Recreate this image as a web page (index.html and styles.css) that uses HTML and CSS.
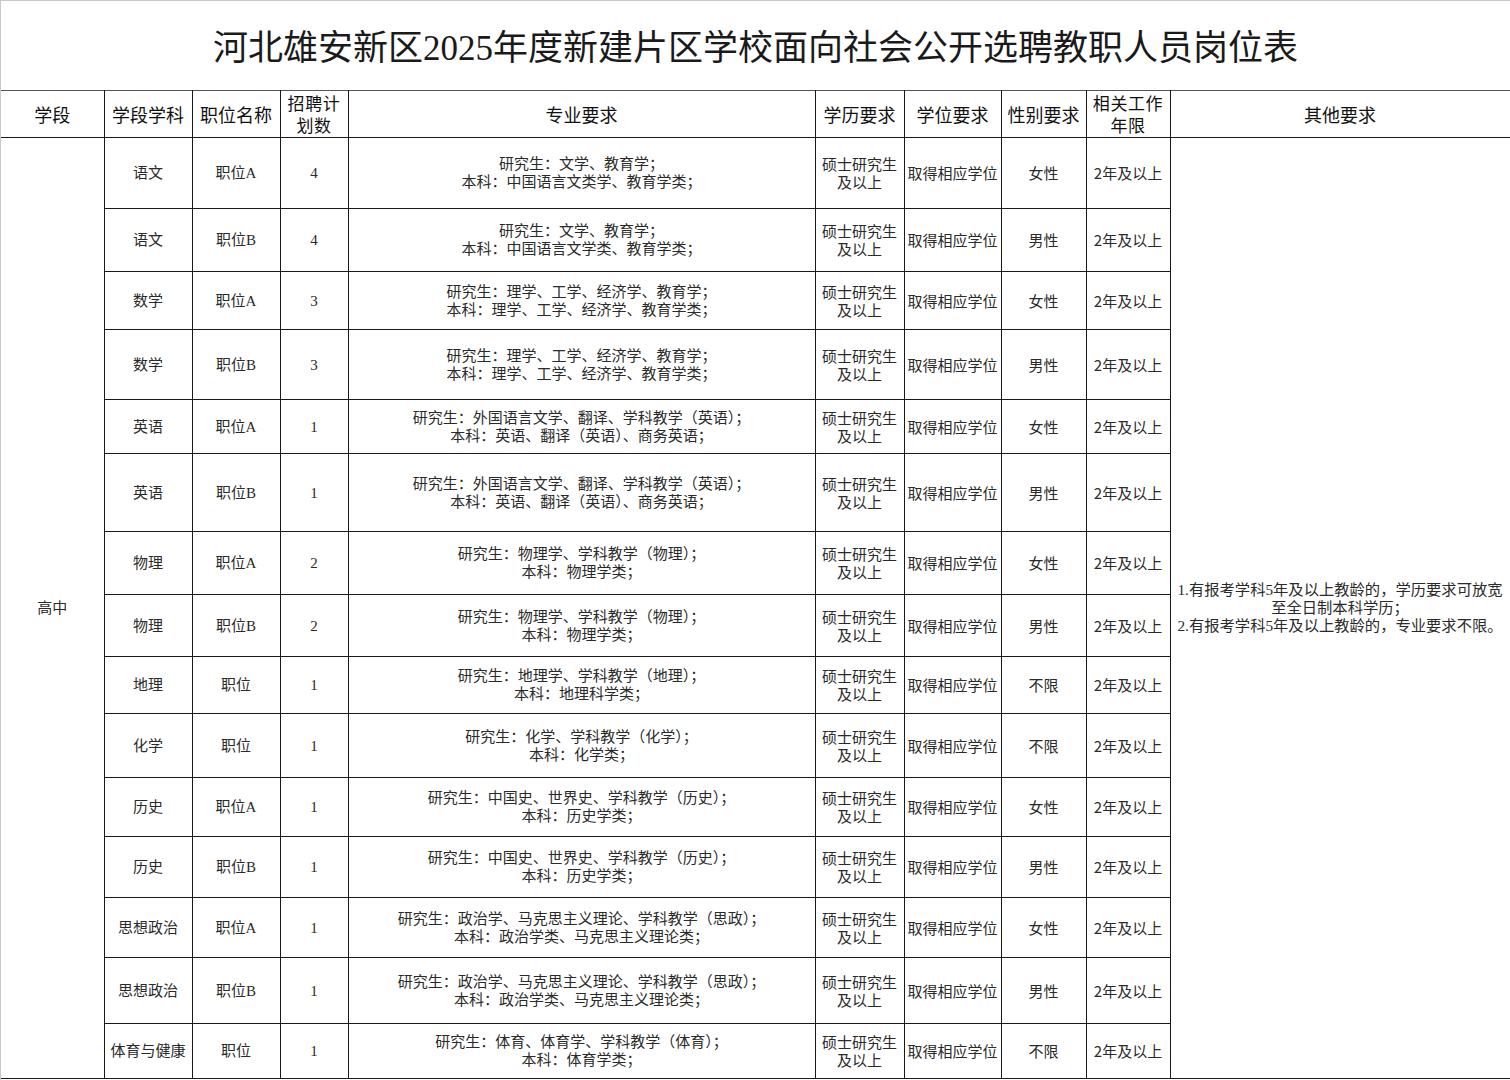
FILE: index.html
```html
<!DOCTYPE html>
<html lang="zh-CN">
<head>
<meta charset="utf-8">
<title>岗位表</title>
<link rel="stylesheet" href="styles.css">
</head>
<body>
<div class="sheet">
  <div class="title">河北雄安新区2025年度新建片区学校面向社会公开选聘教职人员岗位表</div>
  <table class="grid">
    <colgroup>
      <col class="c1"><col class="c2"><col class="c3"><col class="c4"><col class="c5">
      <col class="c6"><col class="c7"><col class="c8"><col class="c9"><col class="c10">
    </colgroup>
    <thead>
      <tr class="head">
        <th class="first">学段</th>
        <th>学段学科</th>
        <th>职位名称</th>
        <th class="two"><span class="ln">招聘计</span><span class="ln">划数</span></th>
        <th>专业要求</th>
        <th>学历要求</th>
        <th>学位要求</th>
        <th>性别要求</th>
        <th class="two"><span class="ln">相关工作</span><span class="ln">年限</span></th>
        <th>其他要求</th>
      </tr>
    </thead>
    <tbody>
      <tr class="h71">
        <td class="first stage" rowspan="15">高中</td>
        <td class="subj">语文</td><td class="pos">职位A</td><td class="num">4</td>
        <td class="major">研究生：文学、教育学；<br>本科：中国语言文类学、教育学类；</td>
        <td class="edu">硕士研究生<br>及以上</td><td class="deg">取得相应学位</td><td class="sex">女性</td><td class="yrs">2年及以上</td>
        <td class="other" rowspan="15">1.有报考学科5年及以上教龄的，学历要求可放宽<br>至全日制本科学历；<br>2.有报考学科5年及以上教龄的，专业要求不限。</td>
      </tr>
      <tr class="h63">
        <td class="subj">语文</td><td class="pos">职位B</td><td class="num">4</td>
        <td class="major">研究生：文学、教育学；<br>本科：中国语言文学类、教育学类；</td>
        <td class="edu">硕士研究生<br>及以上</td><td class="deg">取得相应学位</td><td class="sex">男性</td><td class="yrs">2年及以上</td>
      </tr>
      <tr class="h58">
        <td class="subj">数学</td><td class="pos">职位A</td><td class="num">3</td>
        <td class="major">研究生：理学、工学、经济学、教育学；<br>本科：理学、工学、经济学、教育学类；</td>
        <td class="edu">硕士研究生<br>及以上</td><td class="deg">取得相应学位</td><td class="sex">女性</td><td class="yrs">2年及以上</td>
      </tr>
      <tr class="h70">
        <td class="subj">数学</td><td class="pos">职位B</td><td class="num">3</td>
        <td class="major">研究生：理学、工学、经济学、教育学；<br>本科：理学、工学、经济学、教育学类；</td>
        <td class="edu">硕士研究生<br>及以上</td><td class="deg">取得相应学位</td><td class="sex">男性</td><td class="yrs">2年及以上</td>
      </tr>
      <tr class="h54">
        <td class="subj">英语</td><td class="pos">职位A</td><td class="num">1</td>
        <td class="major">研究生：外国语言文学、翻译、学科教学（英语）；<br>本科：英语、翻译（英语）、商务英语；</td>
        <td class="edu">硕士研究生<br>及以上</td><td class="deg">取得相应学位</td><td class="sex">女性</td><td class="yrs">2年及以上</td>
      </tr>
      <tr class="h78">
        <td class="subj">英语</td><td class="pos">职位B</td><td class="num">1</td>
        <td class="major">研究生：外国语言文学、翻译、学科教学（英语）；<br>本科：英语、翻译（英语）、商务英语；</td>
        <td class="edu">硕士研究生<br>及以上</td><td class="deg">取得相应学位</td><td class="sex">男性</td><td class="yrs">2年及以上</td>
      </tr>
      <tr class="h63">
        <td class="subj">物理</td><td class="pos">职位A</td><td class="num">2</td>
        <td class="major">研究生：物理学、学科教学（物理）；<br>本科：物理学类；</td>
        <td class="edu">硕士研究生<br>及以上</td><td class="deg">取得相应学位</td><td class="sex">女性</td><td class="yrs">2年及以上</td>
      </tr>
      <tr class="h62">
        <td class="subj">物理</td><td class="pos">职位B</td><td class="num">2</td>
        <td class="major">研究生：物理学、学科教学（物理）；<br>本科：物理学类；</td>
        <td class="edu">硕士研究生<br>及以上</td><td class="deg">取得相应学位</td><td class="sex">男性</td><td class="yrs">2年及以上</td>
      </tr>
      <tr class="h57">
        <td class="subj">地理</td><td class="pos">职位</td><td class="num">1</td>
        <td class="major">研究生：地理学、学科教学（地理）；<br>本科：地理科学类；</td>
        <td class="edu">硕士研究生<br>及以上</td><td class="deg">取得相应学位</td><td class="sex">不限</td><td class="yrs">2年及以上</td>
      </tr>
      <tr class="h64">
        <td class="subj">化学</td><td class="pos">职位</td><td class="num">1</td>
        <td class="major">研究生：化学、学科教学（化学）；<br>本科：化学类；</td>
        <td class="edu">硕士研究生<br>及以上</td><td class="deg">取得相应学位</td><td class="sex">不限</td><td class="yrs">2年及以上</td>
      </tr>
      <tr class="h59">
        <td class="subj">历史</td><td class="pos">职位A</td><td class="num">1</td>
        <td class="major">研究生：中国史、世界史、学科教学（历史）；<br>本科：历史学类；</td>
        <td class="edu">硕士研究生<br>及以上</td><td class="deg">取得相应学位</td><td class="sex">女性</td><td class="yrs">2年及以上</td>
      </tr>
      <tr class="h61">
        <td class="subj">历史</td><td class="pos">职位B</td><td class="num">1</td>
        <td class="major">研究生：中国史、世界史、学科教学（历史）；<br>本科：历史学类；</td>
        <td class="edu">硕士研究生<br>及以上</td><td class="deg">取得相应学位</td><td class="sex">男性</td><td class="yrs">2年及以上</td>
      </tr>
      <tr class="h60">
        <td class="subj">思想政治</td><td class="pos">职位A</td><td class="num">1</td>
        <td class="major">研究生：政治学、马克思主义理论、学科教学（思政）；<br>本科：政治学类、马克思主义理论类；</td>
        <td class="edu">硕士研究生<br>及以上</td><td class="deg">取得相应学位</td><td class="sex">女性</td><td class="yrs">2年及以上</td>
      </tr>
      <tr class="h66">
        <td class="subj">思想政治</td><td class="pos">职位B</td><td class="num">1</td>
        <td class="major">研究生：政治学、马克思主义理论、学科教学（思政）；<br>本科：政治学类、马克思主义理论类；</td>
        <td class="edu">硕士研究生<br>及以上</td><td class="deg">取得相应学位</td><td class="sex">男性</td><td class="yrs">2年及以上</td>
      </tr>
      <tr class="h55">
        <td class="subj">体育与健康</td><td class="pos">职位</td><td class="num">1</td>
        <td class="major">研究生：体育、体育学、学科教学（体育）；<br>本科：体育学类；</td>
        <td class="edu">硕士研究生<br>及以上</td><td class="deg">取得相应学位</td><td class="sex">不限</td><td class="yrs">2年及以上</td>
      </tr>
    </tbody>
  </table>
</div>
</body>
</html>
```

FILE: styles.css
```css
* { box-sizing: border-box; }

html, body {
  margin: 0;
  padding: 0;
  background: #ffffff;
}

.sheet {
  width: 1510px;
  height: 1080px;
  overflow: hidden;
  border-top: 1px solid #c8c8c8;
  border-left: 1px solid #c8c8c8;
  background: #fff;
  color: #111;
}

.title {
  height: 89px;
  display: flex;
  align-items: center;
  justify-content: center;
  padding-bottom: 2px;
  font-family: "Liberation Serif", "Noto Sans CJK SC", serif;
  font-size: 35px;
  color: #1a1a1a;
}

.grid {
  width: 1509px;
  border-collapse: collapse;
  table-layout: fixed;
}

.c1 { width: 103px; }
.c2 { width: 88px; }
.c3 { width: 88px; }
.c4 { width: 68px; }
.c5 { width: 467px; }
.c6 { width: 89px; }
.c7 { width: 97px; }
.c8 { width: 85px; }
.c9 { width: 84px; }
.c10 { width: 340px; }

.grid th,
.grid td {
  border: 1px solid #1a1a1a;
  text-align: center;
  vertical-align: middle;
  padding: 0 2px;
}

.grid th.first,
.grid td.first {
  border-left: none;
}

.grid thead th {
  border-top: 1px solid #555;
}

.head { height: 47px; }

.grid th {
  font-family: "Noto Sans CJK SC", "Liberation Sans", sans-serif;
  font-weight: 400;
  font-size: 18px;
  line-height: 22px;
  color: #111;
  white-space: nowrap;
}

.grid th.two {
  font-size: 17px;
  letter-spacing: 0.6px;
}

.ln {
  display: block;
  height: 22px;
  line-height: 22px;
}

.grid td {
  font-family: "Liberation Serif", "Noto Sans CJK SC", serif;
  font-size: 15px;
  line-height: 18px;
  color: #2a2a2a;
}

.grid td.subj,
.grid td.stage,
.grid td.num {
  font-size: 15px;
}

.grid td.edu,
.grid td.deg,
.grid td.sex,
.grid td.yrs {
  font-family: "Noto Sans CJK SC", "Liberation Sans", sans-serif;
  font-size: 15px;
  line-height: 18px;
  white-space: nowrap;
  padding: 0 1px;
}

.grid td.other {
  font-family: "Liberation Serif", "Noto Sans CJK SC", serif;
  font-size: 15.3px;
  line-height: 18px;
  padding: 0 2px;
  white-space: nowrap;
}

.grid td.major {
  white-space: nowrap;
}

.h54 { height: 54px; }
.h55 { height: 55px; }
.h57 { height: 57px; }
.h58 { height: 58px; }
.h59 { height: 59px; }
.h60 { height: 60px; }
.h61 { height: 61px; }
.h62 { height: 62px; }
.h63 { height: 63px; }
.h64 { height: 64px; }
.h66 { height: 66px; }
.h70 { height: 70px; }
.h71 { height: 71px; }
.h78 { height: 78px; }
```
